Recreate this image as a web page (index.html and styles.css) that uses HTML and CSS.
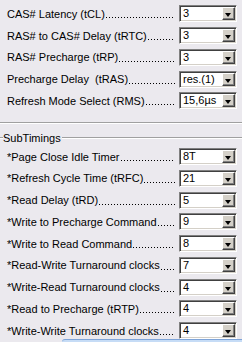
FILE: index.html
```html
<!DOCTYPE html>
<html lang="en">
<head>
    <meta charset="UTF-8">
    <title>Timings</title>
    <link rel="stylesheet" href="styles.css">
</head>
<body>

    <div class="panel">
        <div class="row">
            <span class="label">CAS# Latency (tCL)</span><span class="leader"></span>
            <div class="combo"><span class="value">3</span><span class="drop"></span></div>
        </div>
        <div class="row">
            <span class="label">RAS# to CAS# Delay (tRTC)</span><span class="leader"></span>
            <div class="combo"><span class="value">3</span><span class="drop"></span></div>
        </div>
        <div class="row">
            <span class="label">RAS# Precharge (tRP)</span><span class="leader"></span>
            <div class="combo"><span class="value">3</span><span class="drop"></span></div>
        </div>
        <div class="row">
            <span class="label">Precharge Delay&nbsp; (tRAS)</span><span class="leader"></span>
            <div class="combo"><span class="value">res.(1)</span><span class="drop"></span></div>
        </div>
        <div class="row">
            <span class="label">Refresh Mode Select (RMS)</span><span class="leader"></span>
            <div class="combo"><span class="value">15,6µs</span><span class="drop"></span></div>
        </div>
    </div>

    <div class="divider"></div>

    <div class="group">
        <div class="legend">
            <span class="tick"></span>
            <span class="legend-text">SubTimings</span>
            <span class="rule"></span>
        </div>
        <div class="row">
            <span class="label">*Page Close Idle Timer</span><span class="leader"></span>
            <div class="combo"><span class="value">8T</span><span class="drop"></span></div>
        </div>
        <div class="row">
            <span class="label">*Refresh Cycle Time (tRFC)</span><span class="leader"></span>
            <div class="combo"><span class="value">21</span><span class="drop"></span></div>
        </div>
        <div class="row">
            <span class="label">*Read Delay (tRD)</span><span class="leader"></span>
            <div class="combo"><span class="value">5</span><span class="drop"></span></div>
        </div>
        <div class="row">
            <span class="label">*Write to Precharge Command</span><span class="leader"></span>
            <div class="combo"><span class="value">9</span><span class="drop"></span></div>
        </div>
        <div class="row">
            <span class="label">*Write to Read Command</span><span class="leader"></span>
            <div class="combo"><span class="value">8</span><span class="drop"></span></div>
        </div>
        <div class="row">
            <span class="label">*Read-Write Turnaround clocks</span><span class="leader"></span>
            <div class="combo"><span class="value">7</span><span class="drop"></span></div>
        </div>
        <div class="row">
            <span class="label">*Write-Read Turnaround clocks</span><span class="leader"></span>
            <div class="combo"><span class="value">4</span><span class="drop"></span></div>
        </div>
        <div class="row">
            <span class="label">*Read to Precharge (tRTP)</span><span class="leader"></span>
            <div class="combo"><span class="value">4</span><span class="drop"></span></div>
        </div>
        <div class="row">
            <span class="label">*Write-Write Turnaround clocks</span><span class="leader"></span>
            <div class="combo"><span class="value">4</span><span class="drop"></span></div>
        </div>
    </div>

    <div class="taskbar-edge"></div>

</body>
</html>
```

FILE: styles.css
```css
body {
    margin: 0;
    height: 342px;
    overflow: hidden;
    background-color: #ebe9ee;
    font-family: "Liberation Sans", Arial, sans-serif;
    font-size: 11px;
    color: #000;
    position: relative;
}
.panel {
    padding-top: 3px;
}
.row {
    display: flex;
    align-items: center;
    height: 21.75px;
}
.label {
    margin-left: 7px;
    white-space: nowrap;
}
/* dot leader between label and combo */
.leader {
    flex: 1;
    align-self: center;
    height: 1px;
    margin: 8px 4px 0 1px;
    background-image: linear-gradient(to right, #000 1px, transparent 1px);
    background-size: 3px 1px;
}
.combo {
    display: flex;
    flex: none;
    width: 58px;
    height: 17px;
    margin-right: 5px;
    box-sizing: border-box;
    background-color: #fff;
    border-top: 1px solid #808080;
    border-left: 1px solid #808080;
    border-right: 1px solid #fff;
    border-bottom: 1px solid #fff;
    box-shadow: inset 1px 1px 0 #404040, inset -1px -1px 0 #d4d0c8;
}
.value {
    flex: 1;
    padding-left: 3px;
    line-height: 15px;
    white-space: nowrap;
    overflow: hidden;
}
.drop {
    width: 13px;
    margin: 1px 1px 1px 0;
    box-sizing: border-box;
    background-color: #d4d0c8;
    border-top: 1px solid #fff;
    border-left: 1px solid #fff;
    border-right: 1px solid #404040;
    border-bottom: 1px solid #404040;
    box-shadow: inset -1px -1px 0 #808080;
    position: relative;
}
.drop::after {
    content: "";
    position: absolute;
    left: 2px;
    top: 5px;
    border-left: 3.5px solid transparent;
    border-right: 3.5px solid transparent;
    border-top: 4px solid #000;
}
.divider {
    margin-top: 10px;
    border-top: 1px solid #a0a0a0;
    border-bottom: 1px solid #fff;
}
.group {
    margin-top: 6px;
}
.legend {
    display: flex;
    align-items: center;
    height: 16px;
}
.tick, .rule {
    height: 0;
    border-top: 1px solid #a0a0a0;
    border-bottom: 1px solid #fff;
}
.tick {
    width: 3px;
}
.rule {
    flex: 1;
    margin-left: 1px;
}
.legend-text {
    white-space: nowrap;
}
.taskbar-edge {
    position: absolute;
    left: 62px;
    right: 0;
    bottom: 0;
    height: 2px;
    background-color: #c6dcf6;
    border-top: 1px solid #7ea4d8;
    border-top-left-radius: 3px;
}
```
